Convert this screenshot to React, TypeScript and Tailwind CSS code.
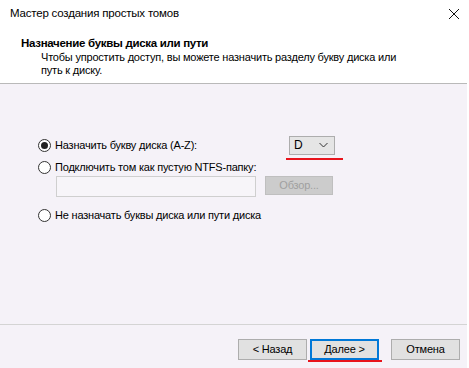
import { ReactNode } from "react";

function Radio({ checked, label }: { checked?: boolean; label: string }) {
  return (
    <div className="flex items-center h-[20px]">
      <span className="w-[13px] h-[13px] rounded-full border border-[#333] bg-white flex items-center justify-center shrink-0">
        {checked && <span className="w-[7px] h-[7px] rounded-full bg-[#222]" />}
      </span>
      <span className="ml-[4px] text-[11px] tracking-[-0.2px] text-black whitespace-nowrap">{label}</span>
    </div>
  );
}

function Button({ children, primary }: { children: ReactNode; primary?: boolean }) {
  return (
    <button
      className={
        "h-[21px] w-[69px] bg-[#e1e1e1] text-[11px] tracking-[-0.2px] text-black flex items-center justify-center " +
        (primary ? "border-2 border-[#0078d7]" : "border border-[#adadad]")
      }
    >
      {children}
    </button>
  );
}

export default function App() {
  return (
    <div
      className="w-[469px] h-[368px] bg-white flex flex-col overflow-hidden"
      style={{ fontFamily: '"Liberation Sans", Arial, sans-serif' }}
    >
      {/* header */}
      <div className="h-[83px] shrink-0">
        <div className="flex items-center justify-between h-[28px] pl-[10px] pr-[8px]">
          <span className="text-[11.5px] tracking-[-0.2px] text-black">Мастер создания простых томов</span>
          <svg width="12" height="12" viewBox="0 0 12 12" className="mr-[1px]">
            <path d="M1 1 L11 11 M11 1 L1 11" stroke="#111" strokeWidth="1" />
          </svg>
        </div>
        <div className="pl-[21px] mt-[7px] text-[11.5px] tracking-[-0.3px] font-bold text-black leading-[16px]">
          Назначение буквы диска или пути
        </div>
        <div className="pl-[41px] text-[11px] tracking-[-0.2px] text-black leading-[13px]">
          Чтобы упростить доступ, вы можете назначить разделу букву диска или
          <br />
          путь к диску.
        </div>
      </div>

      <div className="h-[1px] bg-[#b9b9b9] mr-[2px]" />

      {/* content */}
      <div className="flex-1 flex flex-col bg-[#f5f2f8] mr-[2px]">
        <div className="flex-1 pl-[38px] pt-[51px]">
          <div className="flex items-center">
            <div className="w-[251px]">
              <Radio checked label="Назначить букву диска (A-Z):" />
            </div>
            <div className="relative">
              <div className="w-[46px] h-[19px] bg-[#e5e5e5] border border-[#adadad] flex items-center justify-between pl-[4px] pr-[6px]">
                <span className="text-[12px] text-black">D</span>
                <svg width="9" height="6" viewBox="0 0 9 6">
                  <path d="M0.5 1 L4.5 5 L8.5 1" fill="none" stroke="#333" strokeWidth="1" />
                </svg>
              </div>
              <div className="absolute left-[-3px] top-[22px] w-[57px] h-[2px] bg-[#e8141c]" />
            </div>
          </div>
          <div className="mt-[2px]">
            <Radio label="Подключить том как пустую NTFS-папку:" />
          </div>
          <div className="flex items-start mt-[-1px] ml-[18px]">
            <div className="w-[200px] h-[21px] border border-[#cfcfcf] bg-[#f7f5f9]" />
            <div className="ml-[9px] w-[68px] h-[19px] bg-[#cccccc] border border-[#bfbfbf] text-[11px] tracking-[-0.2px] text-[#a0a0a0] flex items-center justify-center">
              Обзор...
            </div>
          </div>
          <div className="mt-[8px]">
            <Radio label="Не назначать буквы диска или пути диска" />
          </div>
        </div>

        <div className="h-[1px] bg-[#d4d4d4]" />
        <div className="h-[43px] shrink-0 flex items-start justify-end pt-[14px] pr-[7px]">
          <Button>&lt; Назад</Button>
          <div className="relative ml-[3px]">
            <Button primary>Далее &gt;</Button>
            <div className="absolute left-[-2px] top-[21px] w-[74px] h-[2px] bg-[#e8141c]" />
          </div>
          <div className="ml-[12px]">
            <Button>Отмена</Button>
          </div>
        </div>
      </div>
    </div>
  );
}
